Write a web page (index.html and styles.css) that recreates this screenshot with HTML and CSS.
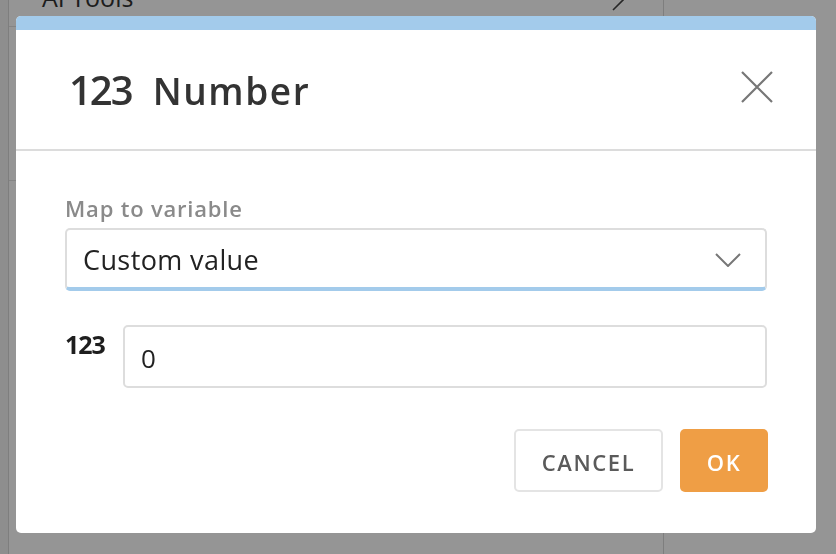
FILE: index.html
```html
<!DOCTYPE html>
<html>
<head>
<meta charset="utf-8">
<link rel="stylesheet" href="styles.css">
</head>
<body>
<div class="app">
  <div class="rail"></div>
  <div class="panel">
    <div class="row first">
      <span class="row-label">AI Tools</span>
      <svg class="row-chev" width="12" height="22" viewBox="0 0 12 22"><path d="M1 1 L11 11 L1 21" fill="none" stroke="#444" stroke-width="1.6"/></svg>
    </div>
    <div class="row"></div>
  </div>
  <div class="side"></div>
</div>
<div class="overlay">
  <div class="dialog">
    <div class="topbar"></div>
    <div class="header">
      <h1 class="title"><span class="title-icon">123</span><span class="title-text">Number</span></h1>
      <svg class="close" width="32" height="32" viewBox="0 0 32 32"><path d="M1 1 L31 31 M31 1 L1 31" fill="none" stroke="#777" stroke-width="2.2"/></svg>
    </div>
    <div class="body">
      <div class="label">Map to variable</div>
      <div class="select">
        <span class="select-text">Custom value</span>
        <svg class="chev" width="26" height="14" viewBox="0 0 26 14"><path d="M1 1 L13 13 L25 1" fill="none" stroke="#777" stroke-width="2"/></svg>
      </div>
      <div class="field-row">
        <span class="field-icon">123</span>
        <div class="input">0</div>
      </div>
      <div class="actions">
        <button class="btn cancel">CANCEL</button>
        <button class="btn ok">OK</button>
      </div>
    </div>
  </div>
</div>
</body>
</html>
```
FILE: styles.css
```css
* { box-sizing: border-box; }
html, body { margin: 0; padding: 0; }
body {
  width: 836px;
  height: 554px;
  overflow: hidden;
  background: #fff;
  font-family: "Open Sans", "Noto Sans", sans-serif;
}
.app {
  display: flex;
  height: 554px;
}
.rail {
  width: 9px;
  border-right: 1px solid #d8d8d8;
  background: #f4f4f4;
}
.panel {
  width: 655px;
  border-right: 1px solid #d8d8d8;
}
.row {
  height: 154px;
  border-bottom: 1px solid #e2e2e2;
}
.row.first {
  height: 67px;
  margin-top: -40px;
  display: flex;
  align-items: flex-start;
  justify-content: space-between;
  padding: 20px 39px 0 33px;
}
.row-label {
  font-size: 25px;
  color: #333;
  line-height: 34px;
}
.row-chev { margin-top: 9px; }
.side { flex: 1; }

.overlay {
  position: fixed;
  inset: 0;
  background: rgba(0, 0, 0, 0.415);
  padding: 16px;
}
.dialog {
  width: 800px;
  height: 517px;
  background: #fff;
  border-radius: 5px;
  overflow: hidden;
  display: flex;
  flex-direction: column;
}
.topbar {
  height: 14px;
  background: #a3cbeb;
}
.header {
  height: 121px;
  border-bottom: 2px solid #dcdcdc;
  display: flex;
  align-items: center;
  justify-content: space-between;
  padding: 0 43px 0 53px;
}
.title {
  margin: 0;
  display: flex;
  align-items: center;
  color: #333;
  font-weight: 600;
}
.title-icon {
  font-size: 40px;
  letter-spacing: -2px;
  margin-right: 21px;
  line-height: 1;
}
.title-text {
  font-size: 37px;
  letter-spacing: 1.6px;
  line-height: 1;
  margin-top: 2px;
}
.close { margin-top: -5px; }
.body {
  padding: 45px 49px 0 49px;
  display: flex;
  flex-direction: column;
}
.label {
  font-size: 22px;
  line-height: 24px;
  color: #8a8a8a;
  font-weight: 600;
  letter-spacing: 0.8px;
}
.select {
  margin-top: 8px;
  height: 63px;
  border: 2px solid #dddddd;
  border-bottom: 4px solid #a3cbeb;
  border-radius: 5px;
  display: flex;
  align-items: center;
  justify-content: space-between;
  padding: 2px 24px 0 16px;
}
.select-text {
  font-size: 27px;
  color: #222;
  letter-spacing: 0.4px;
}
.chev { margin-top: 0; }
.field-row {
  margin-top: 34px;
  display: flex;
  align-items: flex-start;
  gap: 17px;
}
.field-icon {
  font-size: 25px;
  font-weight: 700;
  color: #1e1e1e;
  line-height: 34px;
  margin-top: 2px;
  width: 41px;
  letter-spacing: -1px;
}
.input {
  flex: 1;
  height: 63px;
  border: 2px solid #dddddd;
  border-radius: 5px;
  display: flex;
  align-items: center;
  padding: 2px 16px 0;
  font-size: 26px;
  color: #222;
}
.actions {
  margin-top: 41px;
  display: flex;
  justify-content: flex-end;
  gap: 17px;
  margin-right: -1px;
}
.btn {
  height: 63px;
  border-radius: 5px;
  font-family: "Open Sans", "Noto Sans", sans-serif;
  font-size: 22px;
  font-weight: 600;
  letter-spacing: 1.6px;
  cursor: pointer;
  padding: 2px 0 0;
}
.cancel {
  width: 149px;
  background: #fff;
  border: 2px solid #e4e4e4;
  color: #5a5a5a;
}
.ok {
  width: 88px;
  background: #ef9e45;
  border: none;
  color: #fff;
}
```
